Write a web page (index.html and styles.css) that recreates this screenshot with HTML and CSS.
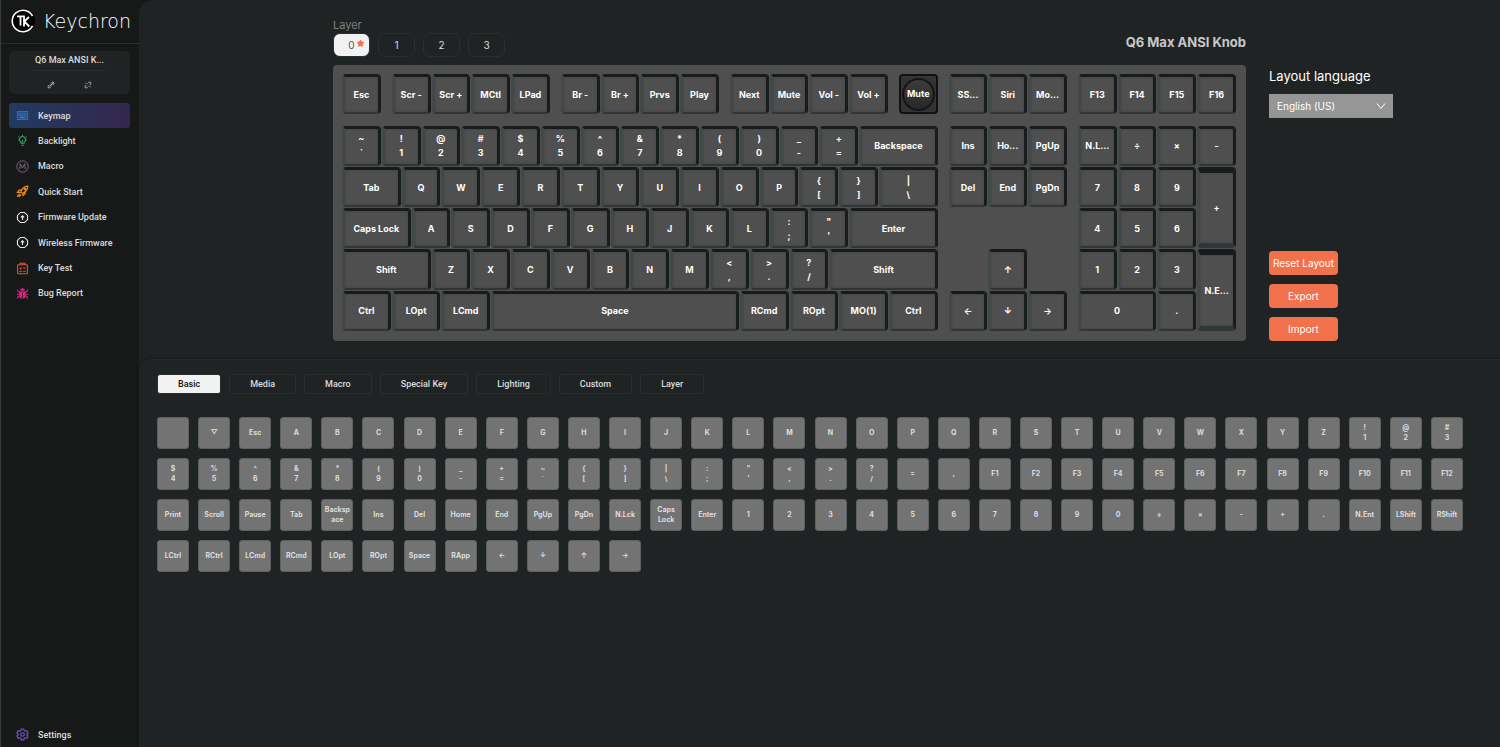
FILE: index.html
```html
<!DOCTYPE html>
<html lang="en">

<head>
  <meta charset="UTF-8">
  <meta name="viewport" content="width=device-width, initial-scale=1.0">
  <title>Keychron Launcher</title>
  <link rel="stylesheet" href="styles.css">
</head>

<body>
  <aside class="sidebar">
    <a href="#" class="brand">
      <svg class="brand-logo" viewBox="0 0 24 24" fill="none" stroke="#fff" aria-hidden="true">
        <circle cx="12" cy="12" r="12" fill="#000" stroke="none" />
        <path stroke-width="1.6" d="M21.500 7.200A10.700 10.700 0 1 0 21.500 16.800" />
        <path stroke-width="1.8" d="M6 7.300h7.500M9.500 7.300v9.200M13 6.400v11.100M18 8l-4.700 4.500 5 5" />
      </svg>
      <span class="brand-name">Keychron</span>
    </a>

    <section class="device">
      <h2 class="device-name">Q6 Max ANSI K...</h2>
      <div class="device-links">
        <button class="icon-button" aria-label="Connect">
          <svg viewBox="0 0 16 16" fill="none" stroke="currentColor" stroke-width="1.500">
            <path d="M6.500 9.500l5-5M5 7.500l-2.500 2.500a2.500 2.500 0 0 0 3.500 3.500L8.500 11M7.500 5L10 2.500A2.500 2.500 0 0 1 13.500 6L11 8.500M5 11l6-6" />
          </svg>
        </button>
        <button class="icon-button" aria-label="Disconnect">
          <svg viewBox="0 0 16 16" fill="none" stroke="currentColor" stroke-width="1.500">
            <path d="M5 7.500l-2.500 2.500a2.500 2.500 0 0 0 3.500 3.500L8.500 11M7.500 5L10 2.500A2.500 2.500 0 0 1 13.500 6L11 8.500M3 4l2 1M11 11l2 1" />
          </svg>
        </button>
      </div>
    </section>

    <nav class="menu">
      <div class="menu-group">
        <a href="#" class="menu-item active">
          <svg class="icon-keymap" viewBox="0 0 16 16" fill="none" stroke="currentColor">
            <rect x="1.500" y="3" width="13" height="10" fill="#24508c" />
            <path stroke="#6aa0e8" stroke-width=".8" d="M4 6h1.500M7.200 6h1.500M10.500 6H12M4 8.300h1.500M7.200 8.300h1.500M10.500 8.300H12M5 10.600h6" />
          </svg>
          Keymap
        </a>
        <a href="#" class="menu-item">
          <svg class="icon-backlight" viewBox="0 0 16 16" fill="none" stroke="currentColor" stroke-width="1.300">
            <path d="M6 11.500V10a3.700 3.700 0 1 1 4 0v1.500zM6.500 13.800h3M8 10V7.500M3 3.200l1 .8M13 3.200l-1 .8M8 1v1.500M2.500 7.500h1M12.500 7.500h1" />
          </svg>
          Backlight
        </a>
        <a href="#" class="menu-item">
          <svg class="icon-macro" viewBox="0 0 16 16" fill="none" stroke="currentColor" stroke-width="1.100">
            <circle cx="8" cy="8" r="7" />
            <path d="M4.500 11.500l.8-7L8 10l2.700-5.500.8 7" />
          </svg>
          Macro
        </a>
        <a href="#" class="menu-item">
          <svg class="icon-start" viewBox="0 0 16 16" fill="none" stroke="currentColor" stroke-width="1.500">
            <path d="M6 8.500C7.500 4 10.500 1.800 14.500 1.500 14.500 5.500 12 8.500 8 10.300zM6.500 6L3.500 6.500 1.800 9l4 0M8.500 10l.2 3 2.500-2.200.5-3.300M4.500 10.500L1.500 14.500M6.500 11.500L3.500 14.500" />
            <circle cx="11" cy="5" r="1" />
          </svg>
          Quick Start
        </a>
        <a href="#" class="menu-item">
          <svg class="icon-firmware" viewBox="0 0 16 16" fill="none" stroke="currentColor" stroke-width="1.400">
            <path d="M8 11V5.800M6 7.800l2-2 2 2" />
            <path d="M5.500 1.800h5l3.700 3.700v5l-3.700 3.700h-5l-3.700-3.700v-5z" />
          </svg>
          Firmware Update
        </a>
        <a href="#" class="menu-item">
          <svg class="icon-firmware" viewBox="0 0 16 16" fill="none" stroke="currentColor" stroke-width="1.400">
            <path d="M8 11V5.800M6 7.800l2-2 2 2" />
            <path d="M5.500 1.800h5l3.700 3.700v5l-3.700 3.700h-5l-3.700-3.700v-5z" />
          </svg>
          Wireless Firmware
        </a>
        <a href="#" class="menu-item">
          <svg class="icon-test" viewBox="0 0 16 16" fill="none" stroke="currentColor" stroke-width="1.300">
            <rect x="2" y="3.500" width="12" height="11" rx="1" />
            <path d="M5 3.500V1.500h6v2M4.500 7.500l1 1L7 6.800M8.500 7.500h3.500M4.500 11l1 1L7 10.500M8.500 11.500h3.500" />
          </svg>
          Key Test
        </a>
        <a href="#" class="menu-item">
          <svg class="icon-bug" viewBox="0 0 16 16" fill="currentColor" stroke="currentColor" stroke-width="1.300">
            <path stroke="none" d="M5 4.500a3 3 0 0 1 6 0zM4 5.500h8V11a4 4 0 0 1-3.500 3.500V7h-1v7.500A4 4 0 0 1 4 11z" />
            <path fill="none" d="M4.500 6.500L2 5V3M11.500 6.500L14 5V3M1 9h3M12 9h3M4.500 11L2 12.500v2M11.500 11l2.500 1.500v2" />
          </svg>
          Bug Report
        </a>
      </div>
      <a href="#" class="menu-item">
        <svg class="icon-settings" viewBox="0 0 16 16" fill="none" stroke="currentColor" stroke-width="1.400">
          <path d="M6.500 1.200h3l.5 2 1.300.8 2-.6 1.500 2.600L13.400 7.500v1l1.400 1.500-1.500 2.600-2-.6-1.300.8-.5 2h-3l-.5-2L4.700 12l-2 .6L1.200 10l1.400-1.500v-1L1.200 6l1.500-2.600 2 .6L6 3.200z" />
          <circle cx="8" cy="8" r="2.200" />
        </svg>
        Settings
      </a>
    </nav>
  </aside>

  <main class="content">
    <section class="board">
      <div class="board-main">
        <header class="board-header">
          <div class="layers">
            <span class="layers-title">Layer</span>
            <div class="layers-list">
              <button class="layer active">0
                <svg class="layer-star" viewBox="0 0 10 10" aria-hidden="true">
                  <path d="M5 .5l1.400 2.300 2.900.6-1.800 2.300.2 3L5 7.900 2.300 8.700l.2-3L.7 3.400l2.900-.6z" />
                </svg>
              </button>
              <button class="layer">1</button>
              <button class="layer">2</button>
              <button class="layer">3</button>
            </div>
          </div>
          <h1 class="board-name">Q6 Max ANSI Knob</h1>
        </header>
        <div class="keyboard"></div>
      </div>

      <div class="board-side">
        <label for="language" class="language-label">Layout language</label>
        <div class="language">
          <select id="language">
            <option>English (US)</option>
            <option>English (UK)</option>
          </select>
          <svg class="language-arrow" viewBox="0 0 10 10" fill="none" stroke="currentColor" aria-hidden="true">
            <path d="M1 2.500l4 5 4-5" />
          </svg>
        </div>
        <div class="actions">
          <button class="action">Reset Layout</button>
          <button class="action">Export</button>
          <button class="action">Import</button>
        </div>
      </div>
    </section>

    <section class="picker">
      <div class="tabs">
        <button class="tab active">Basic</button>
        <button class="tab">Media</button>
        <button class="tab">Macro</button>
        <button class="tab">Special Key</button>
        <button class="tab">Lighting</button>
        <button class="tab">Custom</button>
        <button class="tab">Layer</button>
      </div>
      <div class="keycodes"></div>
    </section>
  </main>

  <script src="script.js"></script>
</body>

</html>
```
FILE: styles.css
```css
*,
*::before,
*::after {
  box-sizing: border-box;
  margin: 0;
  padding: 0;
}

:root {
  --dark: #171918;
  --panel: #1f2324;
  --line: #2a2e30;
  --key: #4f4f4f;
  --keycode: #737373;
  --white: #f2f2f2;
  --orange: #f0714b;

  --ff-inter: Inter, "Liberation Sans", sans-serif;
  --ff-roboto: Roboto, "Liberation Sans", sans-serif;
}

body {
  display: grid;
  grid-template-columns: 139px 1fr;
  min-height: 100vh;
  background-color: var(--dark);
  color: #dcdcdc;
  font-family: var(--ff-inter);
  font-size: 9px;
}

button,
select {
  font: inherit;
  color: inherit;
  border: none;
  background: none;
  cursor: pointer;
}

a {
  color: inherit;
  text-decoration: none;
}

svg {
  display: block;
}

/* SIDEBAR */
.sidebar {
  display: flex;
  flex-direction: column;
  border-left: 1px solid #3a3c3c;
  font-family: var(--ff-roboto);
}

.brand {
  display: flex;
  align-items: center;
  gap: 8px;
  height: 44px;
  padding: 0 0 2px 10px;
  border-bottom: 1px solid var(--line);
}

.brand-logo {
  width: 24px;
  height: 24px;
}

.brand-name {
  color: #fff;
  font-family: "DejaVu Sans", sans-serif;
  font-size: 19px;
  font-weight: 200;
}

.device {
  margin: 7px 9px 9px 8px;
  padding: 4px 24px 5px;
  border-radius: 5px;
  background-color: var(--panel);
}

.device-name {
  padding-bottom: 4px;
  border-bottom: 1px solid var(--line);
  font-size: 9px;
  font-weight: 500;
  line-height: 11px;
  text-align: center;
  white-space: nowrap;
}

.device-links {
  display: flex;
  justify-content: space-around;
  padding-top: 9px;
}

.icon-button {
  width: 8px;
  height: 9px;
}

.menu {
  display: flex;
  flex: 1;
  flex-direction: column;
  justify-content: space-between;
  padding: 0 9px 0 8px;
}

.menu-group {
  display: flex;
  flex-direction: column;
  justify-content: space-between;
  min-height: 203px;
}

.menu-item {
  display: flex;
  align-items: center;
  gap: 9px;
  height: 25px;
  padding-left: 7px;
  border-radius: 3px;
  font-weight: 500;
  white-space: nowrap;
}

.menu-item svg {
  width: 13px;
  height: 13px;
}

.menu-item.active {
  background: linear-gradient(90deg, #213b60, #35264d);
}

.icon-keymap { color: #3a73c4; }
.icon-backlight { color: #2fa866; }
.icon-macro { color: #8a6690; }
.icon-start { color: #f08a1c; }
.icon-firmware { color: #e6e6e6; }
.icon-test { color: #e2593c; }
.icon-bug { color: #e0218a; }
.icon-settings { color: #7c55c8; }

/* CONTENT */
.content {
  display: flex;
  flex-direction: column;
  min-width: 0;
  border-radius: 14px 0 0 0;
  background-color: var(--panel);
}

.board {
  display: grid;
  grid-template-columns: 913fr 231fr;
  gap: 23px;
  padding: 18px 0 18px 194px;
}

.board-header {
  display: flex;
  align-items: center;
  justify-content: space-between;
}

.layers-title {
  display: block;
  color: #7d8080;
  font-size: 11px;
  line-height: 14px;
}

.layers-list {
  display: flex;
  gap: 8px;
  padding: 1px 0 8px;
}

.layer {
  position: relative;
  width: 37px;
  height: 24px;
  border: 1px solid var(--line);
  border-radius: 7px;
  font-size: 10px;
}

.layer.active {
  background-color: var(--white);
  color: #555;
}

.layer-star {
  position: absolute;
  top: 5px;
  right: 4px;
  width: 9px;
  height: 9px;
  fill: var(--orange);
}

.board-name {
  color: #c8c8c8;
  font-size: 13px;
  font-weight: 700;
}

/* quarter-unit columns, 22.5 units wide */
.keyboard {
  display: grid;
  grid-template-columns: repeat(90, minmax(0, 1fr));
  grid-template-rows: 4fr 1fr repeat(5, 4fr);
  min-height: 276px;
  padding: 9px;
  border-radius: 4px;
  background-color: var(--key);
}

.key {
  margin: 0 1px 1px 0;
  border-style: solid;
  border-width: 3px 3px 2px;
  border-color: #171b1b #181c1c #303637 #424747;
  border-radius: 4px;
  background-color: var(--key);
  box-shadow: inset 0 0 2px #3a3e3e;
  color: #fff;
  font-size: 9px;
  font-weight: 700;
  line-height: 14px;
  white-space: pre;
}

.key.tall {
  border-top-width: 6px;
  border-bottom-width: 5px;
}

.key.knob {
  border: 2px solid #111;
  background: #333;
}

.knob-cap {
  display: grid;
  place-items: center;
  width: 33px;
  height: 33px;
  margin: auto;
  border: 2px solid #151515;
  border-radius: 50%;
  background: linear-gradient(#3c3c3c, #282828);
}

.board-side {
  display: flex;
  flex-direction: column;
  align-items: flex-start;
  padding-top: 50px;
}

.language-label {
  color: #fff;
  font-size: 13px;
  line-height: 17px;
}

.language {
  position: relative;
  margin-top: 9px;
}

.language select {
  appearance: none;
  width: 124px;
  height: 24px;
  padding: 0 8px;
  background-color: #969696;
  color: #fff;
  font-size: 10px;
}

.language-arrow {
  position: absolute;
  top: 7px;
  right: 7px;
  width: 10px;
  height: 10px;
  color: #fff;
  pointer-events: none;
}

.actions {
  display: grid;
  gap: 9px;
  margin-top: auto;
}

.action {
  width: 69px;
  height: 24px;
  border-radius: 4px;
  background-color: var(--orange);
  color: #fff;
  font-size: 10px;
  white-space: nowrap;
}

/* KEYCODE PICKER */
.picker {
  flex: 1;
  padding: 14px 37px 14px 18px;
  border-top: 1px solid #262a2b;
  border-radius: 14px 0 0 0;
  box-shadow: 0 -1px 3px #17191a;
}

.tabs {
  display: flex;
  gap: 8px;
  margin-bottom: 23px;
}

.tab {
  height: 20px;
  padding: 0 20px;
  border: 1px solid #292d2e;
  border-radius: 3px;
  font-family: var(--ff-roboto);
  font-weight: 500;
}

.tab.active {
  background-color: var(--white);
  color: #111;
}

.keycodes {
  display: grid;
  grid-template-columns: repeat(32, 32px);
  justify-content: space-between;
  row-gap: 9px;
}

.keycode {
  height: 32px;
  padding: 0 1px;
  border: 1px solid #5f6060;
  border-radius: 3px;
  background-color: var(--keycode);
  color: #dedede;
  font-size: 7px;
  font-weight: 700;
  line-height: 10px;
  white-space: pre-line;
  overflow-wrap: anywhere;
}
```
FILE: script.js
```js
// [label, width in units, height in rows]; a bare number is a gap in units
const rows = [
  ["Esc", 0.25, "Scr -", "Scr +", "MCtl", "LPad", 0.25, "Br -", "Br +", "Prvs", "Play", 0.25,
    "Next", "Mute", "Vol -", "Vol +", 0.25, ["Mute", 1, 1, "knob"], 0.25,
    "SS...", "Siri", "Mo...", 0.25, "F13", "F14", "F15", "F16"],
  ["~\n`", "!\n1", "@\n2", "#\n3", "$\n4", "%\n5", "^\n6", "&\n7", "*\n8", "(\n9", ")\n0", "_\n-", "+\n=",
    ["Backspace", 2], 0.25, "Ins", "Ho...", "PgUp", 0.25, "N.L...", "÷", "×", "-"],
  [["Tab", 1.5], ..."QWERTYUIOP", "{\n[", "}\n]", ["|\n\\", 1.5], 0.25,
    "Del", "End", "PgDn", 0.25, "7", "8", "9", ["+", 1, 2, "tall"]],
  [["Caps Lock", 1.75], ..."ASDFGHJKL", ":\n;", "\"\n'", ["Enter", 2.25], 3.5, "4", "5", "6"],
  [["Shift", 2.25], ..."ZXCVBNM", "<\n,", ">\n.", "?\n/", ["Shift", 2.75], 1.25,
    "↑", 1.25, "1", "2", "3", ["N.E...", 1, 2, "tall"]],
  [["Ctrl", 1.25], ["LOpt", 1.25], ["LCmd", 1.25], ["Space", 6.25], ["RCmd", 1.25], ["ROpt", 1.25],
    ["MO(1)", 1.25], ["Ctrl", 1.25], 0.25, "←", "↓", "→", 0.25, ["0", 2], "."],
];

const keycodes = [
  "", "▽", "Esc", ..."ABCDEFGHIJKLMNOPQRSTUVWXYZ", "!\n1", "@\n2", "#\n3",
  "$\n4", "%\n5", "^\n6", "&\n7", "*\n8", "(\n9", ")\n0", "_\n-", "+\n=", "~\n`", "{\n[", "}\n]", "|\n\\",
  ":\n;", "\"\n'", "<\n,", ">\n.", "?\n/", "=", ",",
  "F1", "F2", "F3", "F4", "F5", "F6", "F7", "F8", "F9", "F10", "F11", "F12",
  "Print", "Scroll", "Pause", "Tab", "Backspace", "Ins", "Del", "Home", "End", "PgUp", "PgDn", "N.Lck",
  "Caps Lock", "Enter", ..."1234567890", "÷", "×", "-", "+", ".", "N.Ent", "LShift", "RShift",
  "LCtrl", "RCtrl", "LCmd", "RCmd", "LOpt", "ROpt", "Space", "RApp", "←", "↓", "↑", "→",
];

const keyboard = document.querySelector(".keyboard");
const keycodeList = document.querySelector(".keycodes");

rows.forEach((row, i) => {
  let column = 1;
  // the second grid row is the gap under the function keys
  const gridRow = i === 0 ? 1 : i + 2;

  for (const item of row) {
    if (typeof item === "number") {
      column += item * 4;
      continue;
    }

    const [label, width = 1, height = 1, type] = Array.isArray(item) ? item : [item];
    const key = document.createElement("button");
    key.className = type ? `key ${type}` : "key";
    key.style.gridArea = `${gridRow} / ${column} / span ${height} / span ${width * 4}`;

    if (type === "knob") {
      const cap = document.createElement("span");
      cap.className = "knob-cap";
      cap.textContent = label;
      key.append(cap);
    } else {
      key.textContent = label;
    }

    keyboard.append(key);
    column += width * 4;
  }
});

for (const label of keycodes) {
  const keycode = document.createElement("button");
  keycode.className = "keycode";
  keycode.textContent = label;
  if (!label) keycode.setAttribute("aria-label", "None");
  keycodeList.append(keycode);
}
```
